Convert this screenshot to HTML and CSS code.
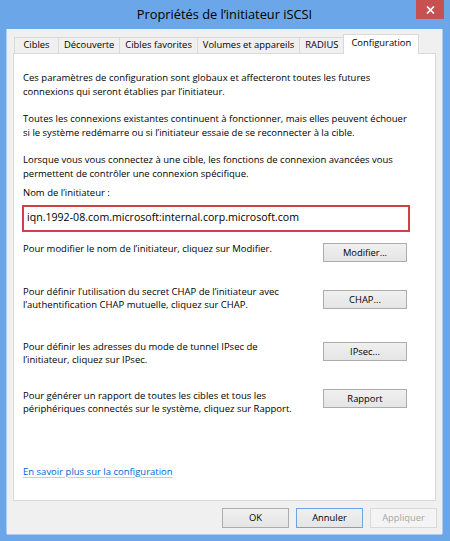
FILE: index.html
```html
<!DOCTYPE html>
<html lang="fr">
<head>
<meta charset="utf-8">
<title>Propriétés de l’initiateur iSCSI</title>
<link rel="stylesheet" href="styles.css">
</head>
<body>
<div class="window">
  <header class="titlebar">
    <span class="title">Propriétés de l’initiateur iSCSI</span>
    <span class="close" aria-label="Fermer"><svg width="9" height="8" viewBox="0 0 9 8"><path d="M1 0.5 L8 7.5 M8 0.5 L1 7.5" stroke="#fff" stroke-width="1.7" fill="none"/></svg></span>
  </header>
  <div class="client">
    <nav class="tabs">
      <span class="tab">Cibles</span>
      <span class="tab">Découverte</span>
      <span class="tab">Cibles favorites</span>
      <span class="tab">Volumes et appareils</span>
      <span class="tab">RADIUS</span>
      <span class="tab active">Configuration</span>
    </nav>
    <section class="panel">
      <p class="para">Ces paramètres de configuration sont globaux et affecteront toutes les futures<br>connexions qui seront établies par l’initiateur.</p>
      <p class="para">Toutes les connexions existantes continuent à fonctionner, mais elles peuvent échouer<br>si le système redémarre ou si l’initiateur essaie de se reconnecter à la cible.</p>
      <p class="para">Lorsque vous vous connectez à une cible, les fonctions de connexion avancées vous<br>permettent de contrôler une connexion spécifique.</p>
      <p class="label">Nom de l’initiateur :</p>
      <div class="field">iqn.1992-08.com.microsoft:internal.corp.microsoft.com</div>
      <div class="row row-modify">
        <p>Pour modifier le nom de l’initiateur, cliquez sur Modifier.</p>
        <span class="btn btn-modify">Modifier...</span>
      </div>
      <div class="row row-chap">
        <p>Pour définir l’utilisation du secret CHAP de l’initiateur avec<br>l’authentification CHAP mutuelle, cliquez sur CHAP.</p>
        <span class="btn btn-chap">CHAP...</span>
      </div>
      <div class="row row-ipsec">
        <p>Pour définir les adresses du mode de tunnel IPsec de<br>l’initiateur, cliquez sur IPsec.</p>
        <span class="btn btn-ipsec">IPsec...</span>
      </div>
      <div class="row row-report">
        <p>Pour générer un rapport de toutes les cibles et tous les<br>périphériques connectés sur le système, cliquez sur Rapport.</p>
        <span class="btn btn-report">Rapport</span>
      </div>
      <p class="more"><a class="link" href="#">En savoir plus sur la configuration</a></p>
    </section>
    <footer class="footer">
      <span class="dlg-btn">OK</span>
      <span class="dlg-btn default">Annuler</span>
      <span class="dlg-btn disabled">Appliquer</span>
    </footer>
  </div>
</div>
</body>
</html>
```

FILE: styles.css
```css
html, body {
  margin: 0;
  padding: 0;
  background: #6ba6e8;
}

body {
  font-family: "Open Sans", "Noto Sans", sans-serif;
  color: #000;
}

.window {
  width: 450px;
  height: 541px;
  box-sizing: border-box;
  background: #6ba6e8;
  padding: 0 8px 7px 7px;
  display: flex;
  flex-direction: column;
}

.titlebar {
  height: 29px;
  position: relative;
  display: flex;
  align-items: center;
  justify-content: center;
  flex: none;
}

.title {
  font-size: 12.8px;
  line-height: 16px;
  margin-top: -1px;
  color: #000;
  white-space: nowrap;
}

.close {
  position: absolute;
  top: 0;
  right: -2px;
  width: 28px;
  height: 19px;
  background: #c75050;
  display: flex;
  align-items: center;
  justify-content: center;
}

.close svg {
  display: block;
}

.client {
  flex: 1;
  background: #f0f0f0;
  display: flex;
  flex-direction: column;
  padding: 5px 6px 6px 6px;
  box-shadow: -1px 0 0 #a9cdf4, 1px 0 0 #a9cdf4, 0 1px 0 #a9cdf4;
}

.tabs {
  display: flex;
  align-items: flex-end;
  height: 19px;
  padding-left: 1px;
  position: relative;
  z-index: 1;
  flex: none;
}

.tab {
  height: 16px;
  box-sizing: border-box;
  border: 1px solid #d9d9d9;
  border-bottom: 0;
  margin-left: -1px;
  padding: 0 5px;
  min-width: 45px;
  text-align: center;
  font-size: 9.4px;
  line-height: 14px;
  background: #f0f0f0;
  white-space: nowrap;
}

.tab:first-child {
  margin-left: 0;
}

.tab.active {
  height: 20px;
  margin-bottom: -1px;
  padding: 1px 7px 0;
  background: #fff;
}

.panel {
  flex: 1;
  background: #fff;
  border: 1px solid #d9d9d9;
  padding: 17px 28px 0 9px;
  font-size: 9.5px;
  line-height: 13.5px;
}

.panel p {
  margin: 0;
  white-space: nowrap;
}

.para + .para {
  margin-top: 14px;
}

.panel .label {
  margin-top: 6px;
}

.field {
  margin: 5px 0 0 -1px;
  width: 388px;
  height: 27px;
  box-sizing: border-box;
  border: 2px solid #d23f45;
  padding: 0 0 2px 3px;
  font-size: 10.6px;
  line-height: 21px;
  background: #fff;
  white-space: nowrap;
}

.row {
  display: flex;
  justify-content: space-between;
  align-items: flex-start;
}

.row-modify { margin-top: 10px; }
.row-chap { margin-top: 23px; }
.row-ipsec { margin-top: 28px; }
.row-report { margin-top: 22px; }

.btn {
  width: 84px;
  height: 19px;
  box-sizing: border-box;
  border: 1px solid #acacac;
  background: linear-gradient(#f0f0f0, #e5e5e5);
  font-size: 9.4px;
  line-height: 17px;
  text-align: center;
  flex: none;
}

.btn-modify { margin-top: 1px; }
.btn-chap { margin-top: 5px; }
.btn-ipsec { margin-top: 2px; }
.btn-report { margin-top: 0; }

.panel .more {
  margin-top: 49px;
}

.link {
  color: #0066cc;
  text-decoration: underline;
  text-decoration-color: #b5d3f1;
  text-decoration-thickness: 1px;
  text-underline-offset: 2px;
}

.footer {
  display: flex;
  justify-content: flex-end;
  gap: 7px;
  margin: 7px -1px 0 0;
  height: 20px;
  flex: none;
}

.dlg-btn {
  width: 67px;
  height: 20px;
  box-sizing: border-box;
  border: 1px solid #acacac;
  background: linear-gradient(#f0f0f0, #e5e5e5);
  font-size: 9.4px;
  line-height: 18px;
  text-align: center;
}

.dlg-btn.default {
  border-color: #6aa6e2;
}

.dlg-btn.disabled {
  border-color: #d9d9d9;
  background: #f4f4f4;
  color: #a6a6a6;
}
```
